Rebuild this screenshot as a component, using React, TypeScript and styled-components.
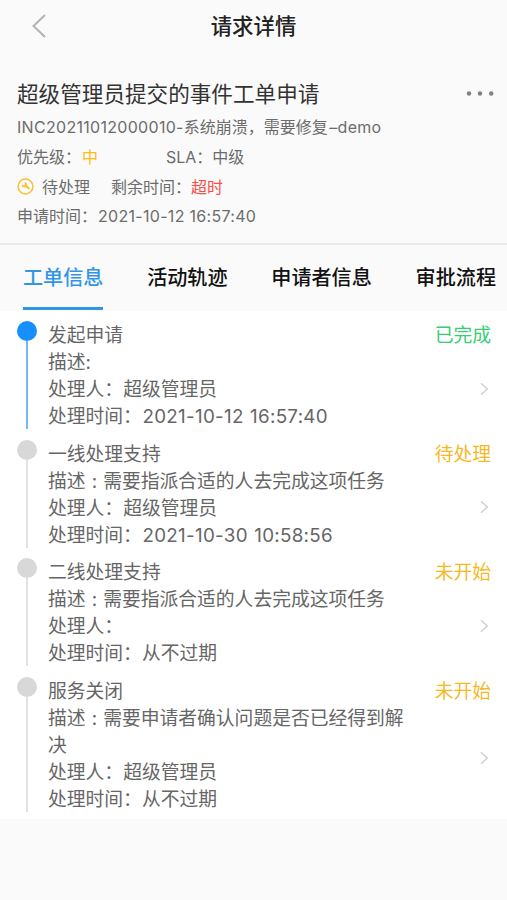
import React from "react";
import styled, { createGlobalStyle } from "styled-components";

const GlobalStyle = createGlobalStyle`
  * { box-sizing: border-box; }
  body {
    margin: 0;
    background: #fafafa;
    font-family: Inter, "Noto Sans CJK SC", sans-serif;
    color: #666;
  }
`;

const Page = styled.div`
  width: 507px;
  height: 900px;
  overflow: hidden;
  background: #fafafa;
`;

const NavBar = styled.header`
  display: grid;
  grid-template-columns: 80px 1fr 80px;
  align-items: center;
  height: 52px;
`;

const BackButton = styled.button`
  display: flex;
  padding: 0 0 0 31px;
  border: 0;
  background: none;
`;

const NavTitle = styled.h1`
  margin: 0;
  text-align: center;
  font-size: 21.4px;
  line-height: 30px;
  font-weight: 500;
  color: #222;
`;

const Summary = styled.section`
  height: 193px;
  padding: 26px 12px 0 17px;
  border-bottom: 2px solid #e9e9e9;
`;

const SummaryHead = styled.div`
  display: flex;
  justify-content: space-between;
  align-items: center;
  height: 32px;
`;

const Title = styled.h2`
  margin: 0;
  font-size: 21.6px;
  line-height: 32px;
  font-weight: 400;
  color: #333;
  white-space: nowrap;
`;

const MoreButton = styled.button`
  display: flex;
  padding: 0;
  border: 0;
  background: none;
`;

const InfoLine = styled.div<{ $height?: number }>`
  display: flex;
  align-items: center;
  height: ${(p) => p.$height ?? 30}px;
  padding-bottom: 2px;
  font-size: 16px;
  line-height: 22px;
  color: #6c6c6c;
  white-space: pre;
`;

const Cell = styled.span<{ $width?: number }>`
  flex: none;
  width: ${(p) => (p.$width ? `${p.$width}px` : "auto")};
`;

const Latin = styled.span<{ $indent?: number }>`
  margin-left: ${(p) => p.$indent ?? 0}px;
  letter-spacing: 0.3px;
`;

const Tinted = styled.span<{ $color: string; $indent?: number }>`
  margin-left: ${(p) => p.$indent ?? 0}px;
  color: ${(p) => p.$color};
`;

const StateIcon = styled.svg`
  flex: none;
  margin-right: 8px;
`;

const Tabs = styled.nav`
  display: flex;
  justify-content: space-between;
  height: 66px;
  padding: 0 11px 0 23px;
`;

const Tab = styled.button<{ $active?: boolean }>`
  height: 65px;
  padding: 3px 0 0;
  border: 0;
  border-bottom: 3px solid ${(p) => (p.$active ? "#3195e6" : "transparent")};
  background: none;
  font: 500 20.1px/61px Inter, "Noto Sans CJK SC", sans-serif;
  color: ${(p) => (p.$active ? "#3195e6" : "#111")};
  white-space: nowrap;
`;

const Timeline = styled.ol`
  display: flex;
  flex-direction: column;
  gap: 10.7px;
  margin: 0;
  padding: 10px 16px 7px 17px;
  list-style: none;
  background: #fff;
`;

const Step = styled.li`
  display: grid;
  grid-template-columns: 20px 1fr;
  column-gap: 11px;
`;

const Rail = styled.div`
  display: flex;
  flex-direction: column;
  align-items: center;
`;

const Dot = styled.span<{ $active?: boolean }>`
  width: 20px;
  height: 20px;
  border-radius: 50%;
  background: ${(p) => (p.$active ? "#188fff" : "#d8d8d8")};
`;

const Stem = styled.span<{ $active?: boolean }>`
  flex: 1;
  width: 2px;
  background: ${(p) => (p.$active ? "#74b9f8" : "#e2e2e2")};
`;

const StepHead = styled.div`
  display: flex;
  justify-content: space-between;
  height: 27px;
  padding-top: 1px;
  font-size: 18.8px;
  line-height: 27px;
`;

const StepBody = styled.div`
  display: flex;
  justify-content: space-between;
  align-items: center;
  font-size: 18.8px;
  line-height: 27px;
`;

const Details = styled.div`
  width: 362px;
  margin-bottom: -1px;
  padding-top: 1px;
`;

const DetailLine = styled.div`
  min-height: 27px;
  word-spacing: 0.8px;
`;

type StepData = {
  name: string;
  status: string;
  color: string;
  description: string;
  handler: string;
  time: string;
  active?: boolean;
};

const steps: StepData[] = [
  { name: "发起申请", status: "已完成", color: "#35cf73", description: "描述:", handler: "超级管理员", time: "2021-10-12 16:57:40", active: true },
  { name: "一线处理支持", status: "待处理", color: "#f5b91f", description: "描述 : 需要指派合适的人去完成这项任务", handler: "超级管理员", time: "2021-10-30 10:58:56" },
  { name: "二线处理支持", status: "未开始", color: "#f5b91f", description: "描述 : 需要指派合适的人去完成这项任务", handler: "", time: "从不过期" },
  { name: "服务关闭", status: "未开始", color: "#f5b91f", description: "描述 : 需要申请者确认问题是否已经得到解决", handler: "超级管理员", time: "从不过期" },
];

const tabs = ["工单信息", "活动轨迹", "申请者信息", "审批流程"];

export default function App() {
  return (
    <>
      <GlobalStyle />
      <Page>
        <NavBar>
          <BackButton aria-label="返回">
            <svg width="16" height="26" viewBox="0 0 16 26" fill="none" stroke="#b3b3b3" strokeWidth="2">
              <path d="M14 2 2.5 13 14 24" />
            </svg>
          </BackButton>
          <NavTitle>请求详情</NavTitle>
        </NavBar>
        <Summary>
          <SummaryHead>
            <Title>超级管理员提交的事件工单申请</Title>
            <MoreButton aria-label="更多">
              <svg width="29" height="6" viewBox="0 0 29 6" fill="#808080">
                <circle cx="3" cy="2.5" r="2.2" />
                <circle cx="14" cy="2.5" r="2.2" />
                <circle cx="25.2" cy="2.5" r="2.2" />
              </svg>
            </MoreButton>
          </SummaryHead>
          <InfoLine $height={36}>
            <Latin>INC20211012000010-</Latin>系统崩溃，需要修复<Latin $indent={1.5}>–demo</Latin>
          </InfoLine>
          <InfoLine $height={24}>
            <Cell $width={149}>
              优先级：<Tinted $color="#fdbd16" $indent={1}>中</Tinted>
            </Cell>
            <Cell>SLA：中级</Cell>
          </InfoLine>
          <InfoLine $height={35}>
            <StateIcon width="17" height="17" viewBox="0 0 17 17" fill="none">
              <circle cx="8.5" cy="8.5" r="7.4" stroke="#fac12f" strokeWidth="1.5" />
              <path d="M7.4 4.2 9.6 5.3 10.2 7.6 13 10.1 11.8 11.6 8.8 9.2 6.4 9.4 4.5 8 5.2 6.9 7.3 7.6 8 6.6Z" fill="#fac12f" />
            </StateIcon>
            <Cell $width={69}>待处理</Cell>
            <Cell>
              剩余时间：<Tinted $color="#fb4d45">超时</Tinted>
            </Cell>
          </InfoLine>
          <InfoLine $height={24}>
            申请时间：<Latin $indent={1}>2021-10-12 16:57:40</Latin>
          </InfoLine>
        </Summary>
        <Tabs>
          {tabs.map((label, i) => (
            <Tab key={label} $active={i === 0}>{label}</Tab>
          ))}
        </Tabs>
        <Timeline>
          {steps.map((step) => (
            <Step key={step.name}>
              <Rail>
                <Dot $active={step.active} />
                <Stem $active={step.active} />
              </Rail>
              <div>
                <StepHead>
                  <span>{step.name}</span>
                  <Tinted $color={step.color}>{step.status}</Tinted>
                </StepHead>
                <StepBody>
                  <Details>
                    <DetailLine>{step.description}</DetailLine>
                    <DetailLine>处理人：{step.handler}</DetailLine>
                    <DetailLine>
                      处理时间：{/^\d/.test(step.time) ? <Latin $indent={0.5}>{step.time}</Latin> : step.time}
                    </DetailLine>
                  </Details>
                  <svg width="12" height="14" viewBox="0 0 12 14" fill="none" stroke="#cfcfcf" strokeWidth="1.5">
                    <path d="M2 1.2 8.3 7 2 12.8" />
                  </svg>
                </StepBody>
              </div>
            </Step>
          ))}
        </Timeline>
      </Page>
    </>
  );
}
